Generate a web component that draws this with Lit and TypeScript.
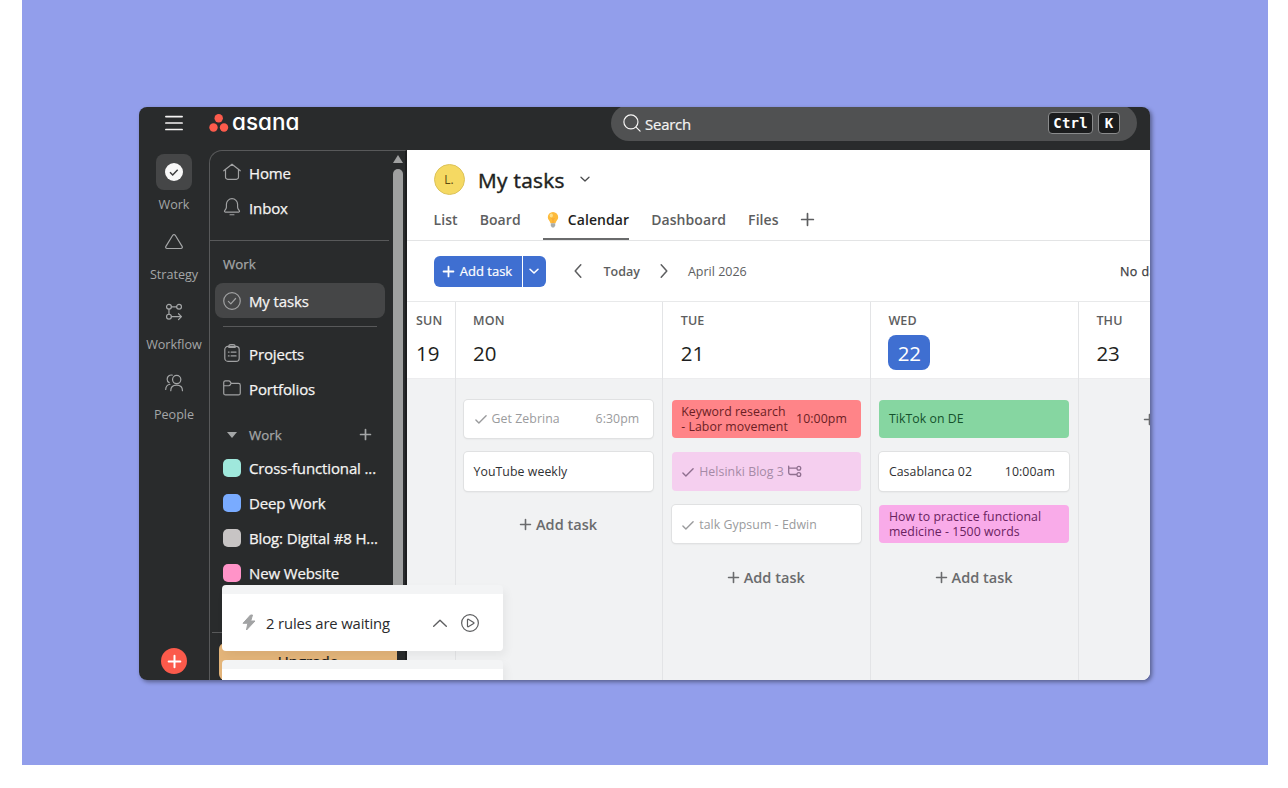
import { LitElement, html, css, svg, nothing } from 'lit';
import type { TemplateResult } from 'lit';
import { customElement, property } from 'lit/decorators.js';
import { classMap } from 'lit/directives/class-map.js';

interface Task {
  title: string;
  second?: string;
  time?: string;
  done?: boolean;
  subtasks?: boolean;
  color?: 'red' | 'pink' | 'green' | 'faded';
}

interface Day {
  name: string;
  date: number;
  today?: boolean;
  addTask?: boolean;
  tasks: Task[];
}

const DAYS: Day[] = [
  { name: 'SUN', date: 19, tasks: [] },
  {
    name: 'MON',
    date: 20,
    addTask: true,
    tasks: [{ title: 'Get Zebrina', time: '6:30pm', done: true }, { title: 'YouTube weekly' }],
  },
  {
    name: 'TUE',
    date: 21,
    addTask: true,
    tasks: [
      { title: 'Keyword research', second: '- Labor movement', time: '10:00pm', color: 'red' },
      { title: 'Helsinki Blog 3', done: true, subtasks: true, color: 'faded' },
      { title: 'talk Gypsum - Edwin', done: true },
    ],
  },
  {
    name: 'WED',
    date: 22,
    today: true,
    addTask: true,
    tasks: [
      { title: 'TikTok on DE', color: 'green' },
      { title: 'Casablanca 02', time: '10:00am' },
      { title: 'How to practice functional', second: 'medicine - 1500 words', color: 'pink' },
    ],
  },
  { name: 'THU', date: 23, addTask: true, tasks: [] },
];

// Stroked 20x20 icons, keyed by name
const ICONS: Record<string, TemplateResult> = {
  menu: svg`<path d="M1 2.8h18M1 10h18M1 17.2h18" stroke-width="1.9"/>`,
  search: svg`<circle cx="8.8" cy="8.8" r="7.8"/><path d="M14.5 14.5l4.500 4.500"/>`,
  home: svg`<path d="M.8 8.600L10 1.300l9.200 7.300M2.800 7.200v8.500a2.400 2.400 0 0 0 2.400 2.400h9.600a2.400 2.400 0 0 0 2.400-2.400V7.200"/>`,
  bell: svg`<path d="M10 .8a6.200 6.200 0 0 0-6.200 6.200v3.300c0 1.300-.8 2.500-1.900 3.800-.5.700-.2 1.500.6 1.500h15c.8 0 1.100-.8.600-1.500-1.100-1.300-1.900-2.500-1.900-3.800V7A6.200 6.200 0 0 0 10 .8zM7.800 18.600h4.400"/>`,
  check: svg`<circle cx="10" cy="10" r="9.200"/><path d="M6 10.500l2.700 2.700L14 7.200"/>`,
  clipboard: svg`<rect x="2" y="2.700" width="16" height="16.500" rx="3.500"/><path d="M6.500 2.700c0-1.300.9-2.100 2.100-2.100h2.800c1.200 0 2.100.8 2.100 2.100v1.200h-7zM6 9h.8M9 9h5.500M6 13.300h.8M9 13.300h5.500"/>`,
  folder: svg`<path d="M.8 4c0-1.200.7-1.900 1.900-1.900h3.600c.8 0 1.400.4 1.800 1.100l1 1.700h8.100c1.200 0 2 .8 2 2v8.800c0 1.200-.8 2-2 2H2.800c-1.200 0-2-.8-2-2zM.8 7.500h5.600c1 0 1.500-.4 1.900-1.300l.7-1.300"/>`,
  strategy: svg`<path d="M8.600 2.500L1 14.800c-.7 1.200-.1 2.400 1.300 2.400h15.400c1.400 0 2-1.200 1.300-2.400L11.400 2.500c-.7-1-2.100-1-2.800 0z"/>`,
  workflow: svg`<circle cx="4.400" cy="4.200" r="2.700"/><circle cx="15.600" cy="4.200" r="2.700"/><circle cx="4.400" cy="15.200" r="2.700"/><path d="M7.100 4.200h5.800M4.400 6.900v5.600M7.100 15.200h11M15 11.900l3.300 3.300-3.300 3.300"/>`,
  people: svg`<circle cx="13" cy="6.200" r="4.600"/><path d="M6.400 18.600c0-3.800 2.700-6.200 6.500-6.200s6.500 2.400 6.500 6.200M8 1.200C4.800.7 2.400 2.900 2.400 5.700c0 1.700.8 3.100 2.200 3.900M5.500 11.400C2.700 12 .8 14.100.8 17.200"/>`,
  chevronDown: svg`<path d="M2 6.500l8 7.500 8-7.500"/>`,
  chevronUp: svg`<path d="M1 14.500l9-8.500 9 8.500"/>`,
  chevronLeft: svg`<path d="M14 1L6 10l8 9"/>`,
  chevronRight: svg`<path d="M6 1l8 9-8 9"/>`,
  plus: svg`<path d="M10 1v18M1 10h18"/>`,
  tick: svg`<path d="M1.500 11.500l5 5L18.500 4.500"/>`,
  play: svg`<circle cx="10" cy="10" r="9.300"/><path d="M7.200 6.300v7.400c0 .5.500.7.900.5l6-3.600c.5-.3.500-.9 0-1.200l-6-3.600c-.4-.2-.9 0-.9.500z"/>`,
  subtasks: svg`<path d="M1 3v9.500c0 1.700.8 2.500 2.500 2.500H12M1 6h11"/><circle cx="15.500" cy="6" r="2.700"/><circle cx="15.500" cy="15" r="2.700"/>`,
};

const iconStyles = css`
  svg {
    display: block;
    flex: none;
    overflow: visible;
  }
`;

function icon(name: string, size: number, weight = 1.2) {
  return html`<svg
    width=${size}
    height=${size}
    viewBox="0 0 20 20"
    fill="none"
    stroke="currentColor"
    stroke-width=${(weight * 20) / size}
    stroke-linecap="round"
    stroke-linejoin="round"
  >
    ${ICONS[name]}
  </svg>`;
}

/** Dark bar with the logo and the search field */
@customElement('top-bar')
export class TopBar extends LitElement {
  static styles = [
    iconStyles,
    css`
      :host {
        display: flex;
        align-items: flex-start;
        height: 43px;
        box-sizing: border-box;
        padding-left: 25px;
        background: #292b2c;
        color: #f5f4f3;
        overflow: hidden;
      }
      .menu {
        padding: 7px 26px 0 1px;
      }
      .logo {
        display: flex;
        align-items: flex-start;
        width: 402px;
      }
      .dots {
        padding-top: 7px;
      }
      .name {
        margin: 0 0 0 3px;
        font: 500 22.5px/30px Inter, 'Open Sans', sans-serif;
        font-feature-settings: 'cv11';
        letter-spacing: 0;
        color: #fff;
      }
      .search {
        display: flex;
        align-items: center;
        box-sizing: border-box;
        width: 526px;
        height: 36px;
        margin-top: -2px;
        padding: 0 17px 0 12px;
        border-radius: 18px;
        background: #505152;
        font-size: 14.9px;
        letter-spacing: -0.2px;
      }
      .hint {
        flex: 1;
        padding: 1px 0 0 4px;
        -webkit-text-stroke: 0.2px currentColor;
      }
      kbd {
        box-sizing: border-box;
        height: 22px;
        margin-left: 5px;
        padding: 0 4.5px;
        border: 1px solid #8a8b8c;
        border-radius: 4px;
        background: #1b1c1d;
        color: #fff;
        font: 700 14px/20px 'DejaVu Sans Mono', 'Liberation Mono', monospace;
        letter-spacing: 0.2px;
      }
      kbd.key {
        padding: 0 5.500px;
      }
    `,
  ];

  render() {
    return html`
      <div class="menu">${icon('menu', 18)}</div>
      <div class="logo">
        <svg class="dots" width="20" height="18" viewBox="0 0 20 18" fill="#fc5b4c">
          <circle cx="9.700" cy="4.300" r="4.200" />
          <circle cx="4.500" cy="13.500" r="4.200" />
          <circle cx="15" cy="13.500" r="4.200" />
        </svg>
        <h1 class="name">asana</h1>
      </div>
      <div class="search">
        ${icon('search', 18)}
        <span class="hint">Search</span>
        <kbd>Ctrl</kbd>
        <kbd class="key">K</kbd>
      </div>
    `;
  }
}

/** Narrow column of work areas at the left edge */
@customElement('nav-rail')
export class NavRail extends LitElement {
  static styles = [
    iconStyles,
    css`
      :host {
        display: flex;
        flex-direction: column;
        align-items: center;
        box-sizing: border-box;
        padding: 4px 0 6px;
        background: #292b2c;
        color: #a4a6a7;
        font-size: 12.6px;
      }
      .item {
        display: flex;
        flex-direction: column;
        align-items: center;
        height: 70.2px;
      }
      .tile {
        display: grid;
        place-items: center;
        width: 36px;
        height: 36px;
        border-radius: 8px;
      }
      .active .tile {
        background: #454647;
      }
      .label {
        line-height: 18px;
        margin-top: 5.700px;
      }
      .create {
        display: grid;
        place-items: center;
        width: 26px;
        height: 26px;
        margin-top: auto;
        border-radius: 50%;
        background: #fb5a4b;
        color: #fff;
      }
    `,
  ];

  render() {
    return html`
      <div class="item active">
        <div class="tile">
          <svg width="18" height="18" viewBox="0 0 18 18" fill="none">
            <circle cx="9" cy="9" r="9" fill="#f8f8f8" />
            <path d="M5 9.300l2.700 2.700 5-5.200" stroke="#3c3d3e" stroke-width="1.500" />
          </svg>
        </div>
        <span class="label">Work</span>
      </div>
      ${[
        ['strategy', 'Strategy'],
        ['workflow', 'Workflow'],
        ['people', 'People'],
      ].map(
        ([name, label]) => html`<div class="item">
          <div class="tile">${icon(name, 18)}</div>
          <span class="label">${label}</span>
        </div>`
      )}
      <div class="create">${icon('plus', 13, 2)}</div>
    `;
  }
}

@customElement('side-bar')
export class SideBar extends LitElement {
  static styles = [
    iconStyles,
    css`
      :host {
        display: flex;
        box-sizing: border-box;
        background: #292b2c;
        color: #f5f4f3;
        overflow: hidden;
      }
      .panel {
        flex: 1;
        display: flex;
        flex-direction: column;
        box-sizing: border-box;
        padding-top: 3.500px;
        border: 1px solid #58595a;
        border-right: 0;
        border-bottom: 0;
        border-top-left-radius: 13px;
        min-width: 0;
      }
      .row {
        flex: none;
        display: flex;
        align-items: center;
        gap: 8px;
        box-sizing: border-box;
        height: 35.1px;
        margin: 0 5px 0 5px;
        padding: 0 8px;
        border-radius: 8px;
        font-size: 15px;
        letter-spacing: -0.13px;
        white-space: nowrap;
        -webkit-text-stroke: 0.25px currentColor;
      }
      .row svg {
        color: #a0a1a2;
      }
      .row span {
        padding-top: 1px;
      }
      .selected {
        background: #454647;
      }
      .heading {
        flex: none;
        display: flex;
        align-items: center;
        height: 35px;
        margin: 5.500px 8px 1.500px 13px;
        color: #a4a6a7;
        font-size: 13.3px;
        -webkit-text-stroke: 0.25px currentColor;
      }
      .heading.group {
        margin-top: 11.500px;
        margin-bottom: -2.500px;
        gap: 9px;
        padding-right: 11px;
      }
      .heading .grow {
        flex: 1;
      }
      .arrow {
        width: 0;
        margin: 0 3px 0 4px;
        border: 5.500px solid transparent;
        border-top: 6px solid #a4a6a7;
        border-bottom: 0;
      }
      .rule {
        flex: none;
        height: 1px;
        background: #58595a;
      }
      .rule.wide {
        margin: 15.500px 1px 0 0;
      }
      .rule.inset {
        margin: 8px 13px 8.500px 13px;
      }
      .rule.foot {
        margin: auto 0 10px 2px;
      }
      .swatch {
        flex: none;
        width: 18px;
        height: 18px;
        border-radius: 5px;
        background: #c7c4c4;
      }
      .teal {
        background: #9fe8dc;
      }
      .blue {
        background: #79abff;
      }
      .pink {
        background: #ff93c8;
      }
      .upgrade {
        flex: none;
        height: 37px;
        margin: 0 -7px 0 9px;
        border-radius: 6px 0 0 6px;
        background: #e4b57a;
        color: #1e1f21;
        font-size: 15px;
        line-height: 37px;
        text-align: center;
        -webkit-text-stroke: 0.25px currentColor;
      }
      .scroll {
        display: flex;
        flex-direction: column;
        align-items: center;
        gap: 6px;
        width: 10px;
        padding: 4px 2px 0 3px;
        border-top: 1px solid #58595a;
        border-right: 2px solid #1d1e1f;
      }
      .up {
        width: 0;
        border: 5.500px solid transparent;
        border-bottom: 8px solid #a0a1a1;
        border-top: 0;
      }
      .thumb {
        width: 10px;
        height: 440px;
        border-radius: 5px;
        background: #9fa0a0;
      }
    `,
  ];

  private link(name: string, label: string, selected = false) {
    return html`<div class=${classMap({ row: true, selected })}>
      ${icon(name, 18)}<span>${label}</span>
    </div>`;
  }

  private project(color: string, label: string) {
    return html`<div class="row"><i class="swatch ${color}"></i><span>${label}</span></div>`;
  }

  render() {
    return html`
      <div class="panel">
        ${this.link('home', 'Home')} ${this.link('bell', 'Inbox')}
        <div class="rule wide"></div>
        <div class="heading">Work</div>
        ${this.link('check', 'My tasks', true)}
        <div class="rule inset"></div>
        ${this.link('clipboard', 'Projects')} ${this.link('folder', 'Portfolios')}
        <div class="heading group">
          <i class="arrow"></i><span class="grow">Work</span>${icon('plus', 11, 1.7)}
        </div>
        ${this.project('teal', 'Cross-functional ...')} ${this.project('blue', 'Deep Work')}
        ${this.project('gray', 'Blog: Digital #8 H...')} ${this.project('pink', 'New Website')}
        <div class="rule foot"></div>
        <div class="upgrade">Upgrade</div>
      </div>
      <div class="scroll">
        <i class="up"></i>
        <i class="thumb"></i>
      </div>
    `;
  }
}

@customElement('task-card')
export class TaskCard extends LitElement {
  static styles = [
    iconStyles,
    css`
      :host {
        display: block;
      }
      .card {
        display: flex;
        align-items: center;
        box-sizing: border-box;
        height: 38.500px;
        padding: 0 14px 0 9.500px;
        border-radius: 4px;
        background: #fff;
        box-shadow: 0 0 0 1px #e0e1e2, 0 1px 2px #0000001c;
        color: #2f3032;
        font-size: 12.3px;
        letter-spacing: 0.07px;
        line-height: 15px;
        white-space: nowrap;
      }
      .title {
        flex: 1;
        display: flex;
        align-items: center;
        gap: 4px;
      }
      .tick {
        padding: 1px 5px 0 1px;
      }
      .done {
        color: #9a9b9d;
      }
      .tinted {
        box-shadow: none;
      }
      .red {
        background: #ff8488;
        color: #6b1e24;
      }
      .green {
        background: #86d6a1;
        color: #14512c;
      }
      .pink {
        background: #f9abe9;
        color: #6a2260;
      }
      .faded {
        background: #f5cfef;
        color: #a58aa6;
      }
      .faded svg {
        color: #8f6f8f;
      }
    `,
  ];

  @property({ attribute: false }) task!: Task;

  render() {
    const { title, second, time, done, subtasks, color } = this.task;
    return html`<div
      class=${classMap({ card: true, done: !!done, tinted: !!color, [color ?? 'plain']: true })}
    >
      ${done ? html`<span class="tick">${icon('tick', 12, 1.4)}</span>` : nothing}
      <span class="title">
        <span>${title}${second ? html`<br />${second}` : nothing}</span>
        ${subtasks ? icon('subtasks', 14, 1.3) : nothing}
      </span>
      ${time ? html`<span>${time}</span>` : nothing}
    </div>`;
  }
}

/** Header, toolbar and week grid */
@customElement('task-calendar')
export class TaskCalendar extends LitElement {
  static styles = [
    iconStyles,
    css`
      :host {
        display: flex;
        flex-direction: column;
        background: #fff;
        color: #1e1f21;
        overflow: hidden;
      }
      .head {
        display: flex;
        align-items: center;
        height: 58px;
        padding: 0 0 1px 26.500px;
      }
      .avatar {
        display: grid;
        place-items: center;
        box-sizing: border-box;
        width: 31px;
        height: 31px;
        border: 1px solid #dcc35a;
        border-radius: 50%;
        background: #f5d962;
        color: #5c4a10;
        font-size: 12px;
      }
      h2 {
        margin: 1px 15px 0 13.500px;
        font-size: 20.800px;
        font-weight: 400;
        letter-spacing: 0.3px;
        -webkit-text-stroke: 0.45px currentColor;
      }
      .head > svg {
        color: #4a4b4d;
      }
      .tabs {
        display: flex;
        height: 31px;
        padding-left: 26.500px;
        gap: 22px;
        border-bottom: 1px solid #e3e4e5;
        color: #5d5e60;
        font-size: 14px;
        font-weight: 600;
        letter-spacing: 0.08px;
        line-height: 21px;
      }
      .tab {
        display: flex;
        align-items: flex-start;
      }
      .tab.current {
        gap: 9px;
        box-sizing: border-box;
        height: 31px;
        padding-left: 4px;
        border-bottom: 2px solid #6a6b6c;
        color: #1e1f21;
      }
      .tab.current svg {
        padding-top: 3px;
      }
      .plus {
        padding-top: 4px;
      }
      .tools {
        display: flex;
        align-items: center;
        height: 60px;
        padding-left: 26.500px;
        border-bottom: 1px solid #e8e9ea;
        color: #5d5e60;
        font-size: 12.500px;
        white-space: nowrap;
      }
      .button {
        display: flex;
        gap: 1px;
        height: 31px;
        margin-right: 25px;
        color: #fff;
        font-size: 13px;
        -webkit-text-stroke: 0.2px currentColor;
      }
      .button span {
        display: flex;
        align-items: center;
        justify-content: center;
        gap: 6px;
        width: 88px;
        border-radius: 6px 0 0 6px;
        background: #3f6fd1;
      }
      .button span + span {
        width: 23px;
        border-radius: 0 6px 6px 0;
      }
      .today {
        margin: 0 17.500px 0 19px;
        font-weight: 600;
      }
      .month {
        flex: 1;
        margin-left: 16.500px;
      }
      .filter {
        width: 30px;
        color: #3c3d3f;
        letter-spacing: 0.4px;
        -webkit-text-stroke: 0.25px currentColor;
      }
      .week {
        flex: 1;
        display: grid;
        grid-template-columns: 48.500px 207.700px 207.700px 208px 208px;
      }
      .day {
        display: flex;
        flex-direction: column;
        border-right: 1px solid #e3e4e6;
        background: #f1f2f3;
      }
      .date {
        height: 77px;
        box-sizing: border-box;
        padding: 8px 0 0 17.500px;
        border-bottom: 1px solid #ececee;
        background: #fff;
      }
      .day:first-child .date {
        padding-left: 9px;
      }
      .name {
        color: #5d5e60;
        font-size: 12.500px;
        font-weight: 600;
        letter-spacing: 0.15px;
        line-height: 22px;
      }
      .number {
        display: inline-block;
        box-sizing: border-box;
        height: 35px;
        margin-top: 3px;
        padding-top: 1px;
        font-size: 20.500px;
        line-height: 35px;
      }
      .number.now {
        width: 42px;
        border-radius: 8px;
        background: #3f6fd1;
        color: #fff;
        text-align: center;
      }
      .cards {
        display: flex;
        flex-direction: column;
        gap: 14.2px;
        padding: 20.500px 9px 0 8.500px;
      }
      .add {
        display: flex;
        align-items: center;
        justify-content: center;
        gap: 5px;
        height: 40px;
        color: #6a6b6d;
        font-size: 14.5px;
        font-weight: 600;
        letter-spacing: 0.03px;
      }
    `,
  ];

  private day(day: Day) {
    return html`<section class="day">
      <div class="date">
        <div class="name">${day.name}</div>
        <span class=${classMap({ number: true, now: !!day.today })}>${day.date}</span>
      </div>
      <div class="cards">
        ${day.tasks.map((task) => html`<task-card .task=${task}></task-card>`)}
        ${day.addTask
          ? html`<div class="add">${icon('plus', 11, 1.6)}<span>Add task</span></div>`
          : nothing}
      </div>
    </section>`;
  }

  render() {
    return html`
      <div class="head">
        <div class="avatar">L.</div>
        <h2>My tasks</h2>
        ${icon('chevronDown', 10, 1.3)}
      </div>
      <div class="tabs">
        <span class="tab">List</span>
        <span class="tab">Board</span>
        <span class="tab current">
          <svg width="12" height="16" viewBox="0 0 12 16">
            <path
              d="M6 0a5.200 5.200 0 0 0-5.200 5.200c0 2.500 2.300 3.600 2.700 6h5c.4-2.400 2.700-3.500 2.700-6A5.200 5.200 0 0 0 6 0z"
              fill="#fdbb3c"
            />
            <ellipse cx="4.300" cy="3.600" rx="1.600" ry="2" fill="#ffe08a" />
            <path d="M4.500 6l1.500 1.500L7.500 6M6 7.500v3.500" fill="none" stroke="#f5a030" stroke-width=".8" />
            <path d="M3.800 11.200h4.400v2.600L7 15.500H5l-1.200-1.700z" fill="#a9adab" />
          </svg>
          Calendar
        </span>
        <span class="tab">Dashboard</span>
        <span class="tab">Files</span>
        <span class="plus">${icon('plus', 13, 1.7)}</span>
      </div>
      <div class="tools">
        <div class="button">
          <span>${icon('plus', 11, 1.8)}Add task</span>
          <span>${icon('chevronDown', 10, 1.6)}</span>
        </div>
        ${icon('chevronLeft', 14, 1.5)}
        <span class="today">Today</span>
        ${icon('chevronRight', 14, 1.5)}
        <span class="month">April 2026</span>
        <span class="filter">No date</span>
      </div>
      <div class="week">${DAYS.map((day) => this.day(day))}</div>
    `;
  }
}

@customElement('app-root')
export class AppRoot extends LitElement {
  static styles = [
    iconStyles,
    css`
      :host {
        display: block;
        box-sizing: border-box;
        width: 1288px;
        height: 788px;
        padding: 0 20px 23px 22px;
        background: #fff;
        font-family: 'Open Sans', 'Noto Sans', sans-serif;
        overflow: hidden;
      }
      .backdrop {
        box-sizing: border-box;
        height: 765px;
        padding: 107px 118px 85px 117px;
        background: #929eeb;
      }
      .window {
        position: relative;
        display: grid;
        grid-template: 43px 530px / 70px 198px 743px;
        border-radius: 8px;
        box-shadow: 2px 2px 4px #00000066;
        overflow: hidden;
      }
      top-bar {
        grid-column: 1 / -1;
      }
      .toasts {
        position: absolute;
        left: 83px;
        top: 478px;
        display: flex;
        flex-direction: column;
        gap: 9px;
        width: 281px;
      }
      .toast {
        display: flex;
        align-items: center;
        box-sizing: border-box;
        height: 66px;
        padding: 0 24px 0 20px;
        border-top: 9px solid #f3f4f5;
        border-radius: 4px;
        background: #fff;
        box-shadow: 3px 5px 10px #0000000d;
        color: #2a2b2d;
        font-size: 14.8px;
        letter-spacing: -0.13px;
      }
      .text {
        flex: 1;
        padding: 0 0 0 10px;
      }
      .toast svg {
        color: #5d5e60;
      }
      .toast svg + svg {
        margin-left: 14px;
      }
    `,
  ];

  render() {
    return html`
      <div class="backdrop">
        <div class="window">
          <top-bar></top-bar>
          <nav-rail></nav-rail>
          <side-bar></side-bar>
          <task-calendar></task-calendar>
          <div class="toasts">
            <div class="toast">
              <svg width="14" height="17" viewBox="0 0 14 17" fill="#a2a3a4">
                <path
                  d="M8.500 1L1 9.300h4.800L4.500 16 13 7H8.700L10.500 1z"
                  stroke="#a2a3a4"
                  stroke-linejoin="round"
                />
              </svg>
              <span class="text">2 rules are waiting</span>
              ${icon('chevronUp', 14, 1.4)} ${icon('play', 18, 1.2)}
            </div>
            <div class="toast"></div>
          </div>
        </div>
      </div>
    `;
  }
}
